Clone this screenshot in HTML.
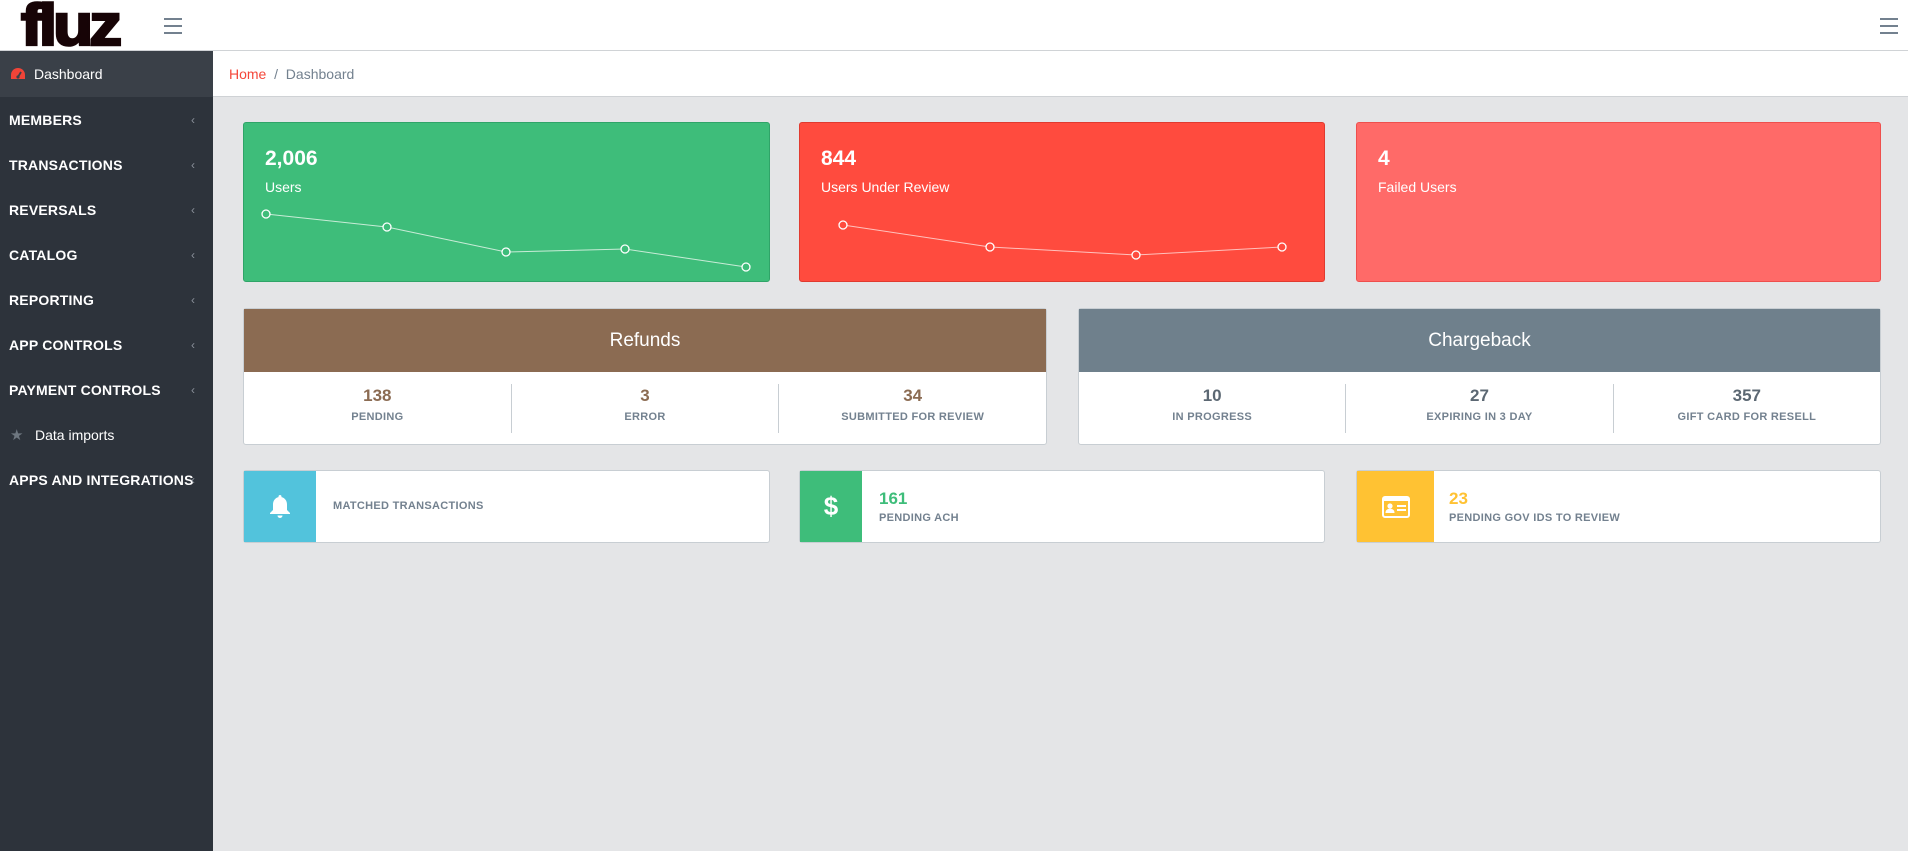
<!DOCTYPE html>
<html><head><meta charset="utf-8"><style>
*{box-sizing:border-box;margin:0;padding:0}
body{width:1908px;height:851px;overflow:hidden;background:#e4e5e7;font-family:"Liberation Sans",sans-serif;position:relative}
.abs{position:absolute}
#hdr{left:0;top:0;width:1908px;height:51px;background:#fff;border-bottom:1px solid #d0d3d6}
.logo{left:21px;top:-8px;font-family:"Liberation Sans",sans-serif;font-weight:900;font-size:58px;letter-spacing:-3.5px;color:#170406;transform:scaleX(1.13);transform-origin:left;-webkit-text-stroke:2.5px #170406}
.ham{width:18px}
.ham i{display:block;height:2px;background:#73818f;margin-bottom:5px}
#side{left:0;top:51px;width:213px;height:800px;background:#2d333b}
.act{left:0;top:51px;width:213px;height:46px;background:#3a4048;color:#fff;font-size:14px;line-height:46px;padding-left:34px}
.mi{left:9px;color:#fff;font-weight:bold;font-size:14px;letter-spacing:.2px}
.car{left:191px;color:#8a9099;font-size:12px}
#bc{left:213px;top:51px;width:1695px;height:46px;background:#fff;border-bottom:1px solid #cfd2d5;font-size:14px;line-height:46px;padding-left:16px;color:#73818f}
.card{border-radius:3px;color:#fff}
.big{font-size:21px;font-weight:bold;position:absolute;left:21px;top:24px}
.sub{font-size:14px;position:absolute;left:21px;top:56px}
.sc{background:#fff;border:1px solid #c8ced3;border-radius:3px}
.sh{height:63px;color:#fff;font-size:19px;text-align:center;line-height:63px}
.cols{display:flex;height:73px;padding:12px 0}
.cols div{flex:1;text-align:center;border-left:1px solid #c8ced3}
.cols div:first-child{border-left:none}
.cols b{display:block;font-size:17px;font-weight:bold;margin-top:2px}
.cols span{display:block;font-size:11px;font-weight:bold;color:#73818f;margin-top:5px;letter-spacing:.3px}
.bc2{background:#fff;border:1px solid #c8ced3;border-radius:3px;height:73px;top:470px}
.ic{position:absolute;left:0;top:0;bottom:0;display:flex;align-items:center;justify-content:center}
.lab{position:absolute;font-size:11px;font-weight:bold;color:#73818f;letter-spacing:.3px}
.num{position:absolute;font-size:17px;font-weight:bold}
</style></head><body>
<div id="hdr" class="abs"></div>
<div class="abs logo">fluz</div>
<div class="abs ham" style="left:164px;top:18px"><i></i><i></i><i></i></div>
<div class="abs ham" style="left:1880px;top:18px"><i></i><i></i><i></i></div>
<div id="side" class="abs"></div>
<div class="abs act">Dashboard</div>
<svg class="abs" style="left:10px;top:67px" width="16" height="14" viewBox="0 0 16 14"><path d="M8 1A7 7 0 0 0 1 8v4h14V8A7 7 0 0 0 8 1z" fill="#f04438"/><path d="M8 10l3-5" stroke="#3a4048" stroke-width="1.8"/><circle cx="8" cy="10" r="1.6" fill="#3a4048"/></svg>
<div class="abs mi" style="top:112px">MEMBERS</div><div class="abs car" style="top:113px">‹</div>
<div class="abs mi" style="top:157px">TRANSACTIONS</div><div class="abs car" style="top:158px">‹</div>
<div class="abs mi" style="top:202px">REVERSALS</div><div class="abs car" style="top:203px">‹</div>
<div class="abs mi" style="top:247px">CATALOG</div><div class="abs car" style="top:248px">‹</div>
<div class="abs mi" style="top:292px">REPORTING</div><div class="abs car" style="top:293px">‹</div>
<div class="abs mi" style="top:337px">APP CONTROLS</div><div class="abs car" style="top:338px">‹</div>
<div class="abs mi" style="top:382px">PAYMENT CONTROLS</div><div class="abs car" style="top:383px">‹</div>
<div class="abs" style="left:10px;top:426px;color:#6e7780;font-size:15px">★</div>
<div class="abs" style="left:35px;top:427px;color:#fff;font-size:14px">Data imports</div>
<div class="abs mi" style="top:472px">APPS AND INTEGRATIONS</div><div class="abs car" style="top:473px">‹</div>
<div id="bc" class="abs"><span style="color:#f4473a">Home</span>&nbsp;&nbsp;/&nbsp;&nbsp;Dashboard</div>

<div class="abs card" style="left:243px;top:122px;width:527px;height:160px;background:#3ebd7a;border:1px solid #2fa468">
<div class="big">2,006</div><div class="sub">Users</div>
<svg class="abs" style="left:0;top:0" width="527" height="160"><polyline points="22,91 143,104 262,129 381,126 502,144" fill="none" stroke="#c8ecd7" stroke-width="1"/><g fill="#3ebd7a" stroke="#fff" stroke-width="1.3"><circle cx="22" cy="91" r="4"/><circle cx="143" cy="104" r="4"/><circle cx="262" cy="129" r="4"/><circle cx="381" cy="126" r="4"/><circle cx="502" cy="144" r="4"/></g></svg></div>
<div class="abs card" style="left:799px;top:122px;width:526px;height:160px;background:#ff4b3e;border:1px solid #e03a2f">
<div class="big">844</div><div class="sub">Users Under Review</div>
<svg class="abs" style="left:0;top:0" width="526" height="160"><polyline points="43,102 190,124 336,132 482,124" fill="none" stroke="#ffc2bd" stroke-width="1"/><g fill="#ff4b3e" stroke="#fff" stroke-width="1.3"><circle cx="43" cy="102" r="4"/><circle cx="190" cy="124" r="4"/><circle cx="336" cy="132" r="4"/><circle cx="482" cy="124" r="4"/></g></svg></div>
<div class="abs card" style="left:1356px;top:122px;width:525px;height:160px;background:#ff6a68;border:1px solid #ee4f4d">
<div class="big">4</div><div class="sub">Failed Users</div></div>

<div class="abs sc" style="left:243px;top:308px;width:804px;height:137px">
<div class="sh" style="background:#8b6b52">Refunds</div>
<div class="cols" style="color:#8b6b52"><div><b>138</b><span>PENDING</span></div><div><b>3</b><span>ERROR</span></div><div><b>34</b><span>SUBMITTED FOR REVIEW</span></div></div></div>
<div class="abs sc" style="left:1078px;top:308px;width:803px;height:137px">
<div class="sh" style="background:#6f808c">Chargeback</div>
<div class="cols" style="color:#5c6873"><div><b>10</b><span>IN PROGRESS</span></div><div><b>27</b><span>EXPIRING IN 3 DAY</span></div><div><b>357</b><span>GIFT CARD FOR RESELL</span></div></div></div>

<div class="abs bc2" style="left:243px;width:527px">
<div class="ic" style="width:72px;background:#52c3dc"><svg width="24" height="26" viewBox="0 0 24 26"><path d="M12 1c-1 0-1.5.7-1.5 1.5v.6C6.8 4 5 7 5 10.5V16l-3 3v1h20v-1l-3-3v-5.5C19 7 17.2 4 13.5 3.1v-.6C13.5 1.7 13 1 12 1z" fill="#fff"/><path d="M9.5 21.5a2.5 2.5 0 0 0 5 0z" fill="#fff"/></svg></div>
<div class="lab" style="left:89px;top:29px">MATCHED TRANSACTIONS</div></div>
<div class="abs bc2" style="left:799px;width:526px">
<div class="ic" style="width:62px;background:#3ebd7a;color:#fff;font-size:26px;font-weight:bold">$</div>
<div class="num" style="left:79px;top:18px;color:#3ebd7a">161</div>
<div class="lab" style="left:79px;top:41px">PENDING ACH</div></div>
<div class="abs bc2" style="left:1356px;width:525px">
<div class="ic" style="width:77px;background:#ffc233"><svg width="28" height="22" viewBox="0 0 28 22"><rect x="1" y="1" width="26" height="20" rx="2" fill="none" stroke="#fff" stroke-width="2"/><rect x="1" y="1" width="26" height="4" fill="#fff"/><circle cx="8" cy="10" r="2.6" fill="#fff"/><path d="M3.5 17c0-3 2-4.2 4.5-4.2s4.5 1.2 4.5 4.2z" fill="#fff"/><rect x="15" y="9" width="9" height="2" fill="#fff"/><rect x="15" y="13" width="9" height="2" fill="#fff"/></svg></div>
<div class="num" style="left:92px;top:18px;color:#ffc233">23</div>
<div class="lab" style="left:92px;top:41px">PENDING GOV IDS TO REVIEW</div></div>
</body></html>
